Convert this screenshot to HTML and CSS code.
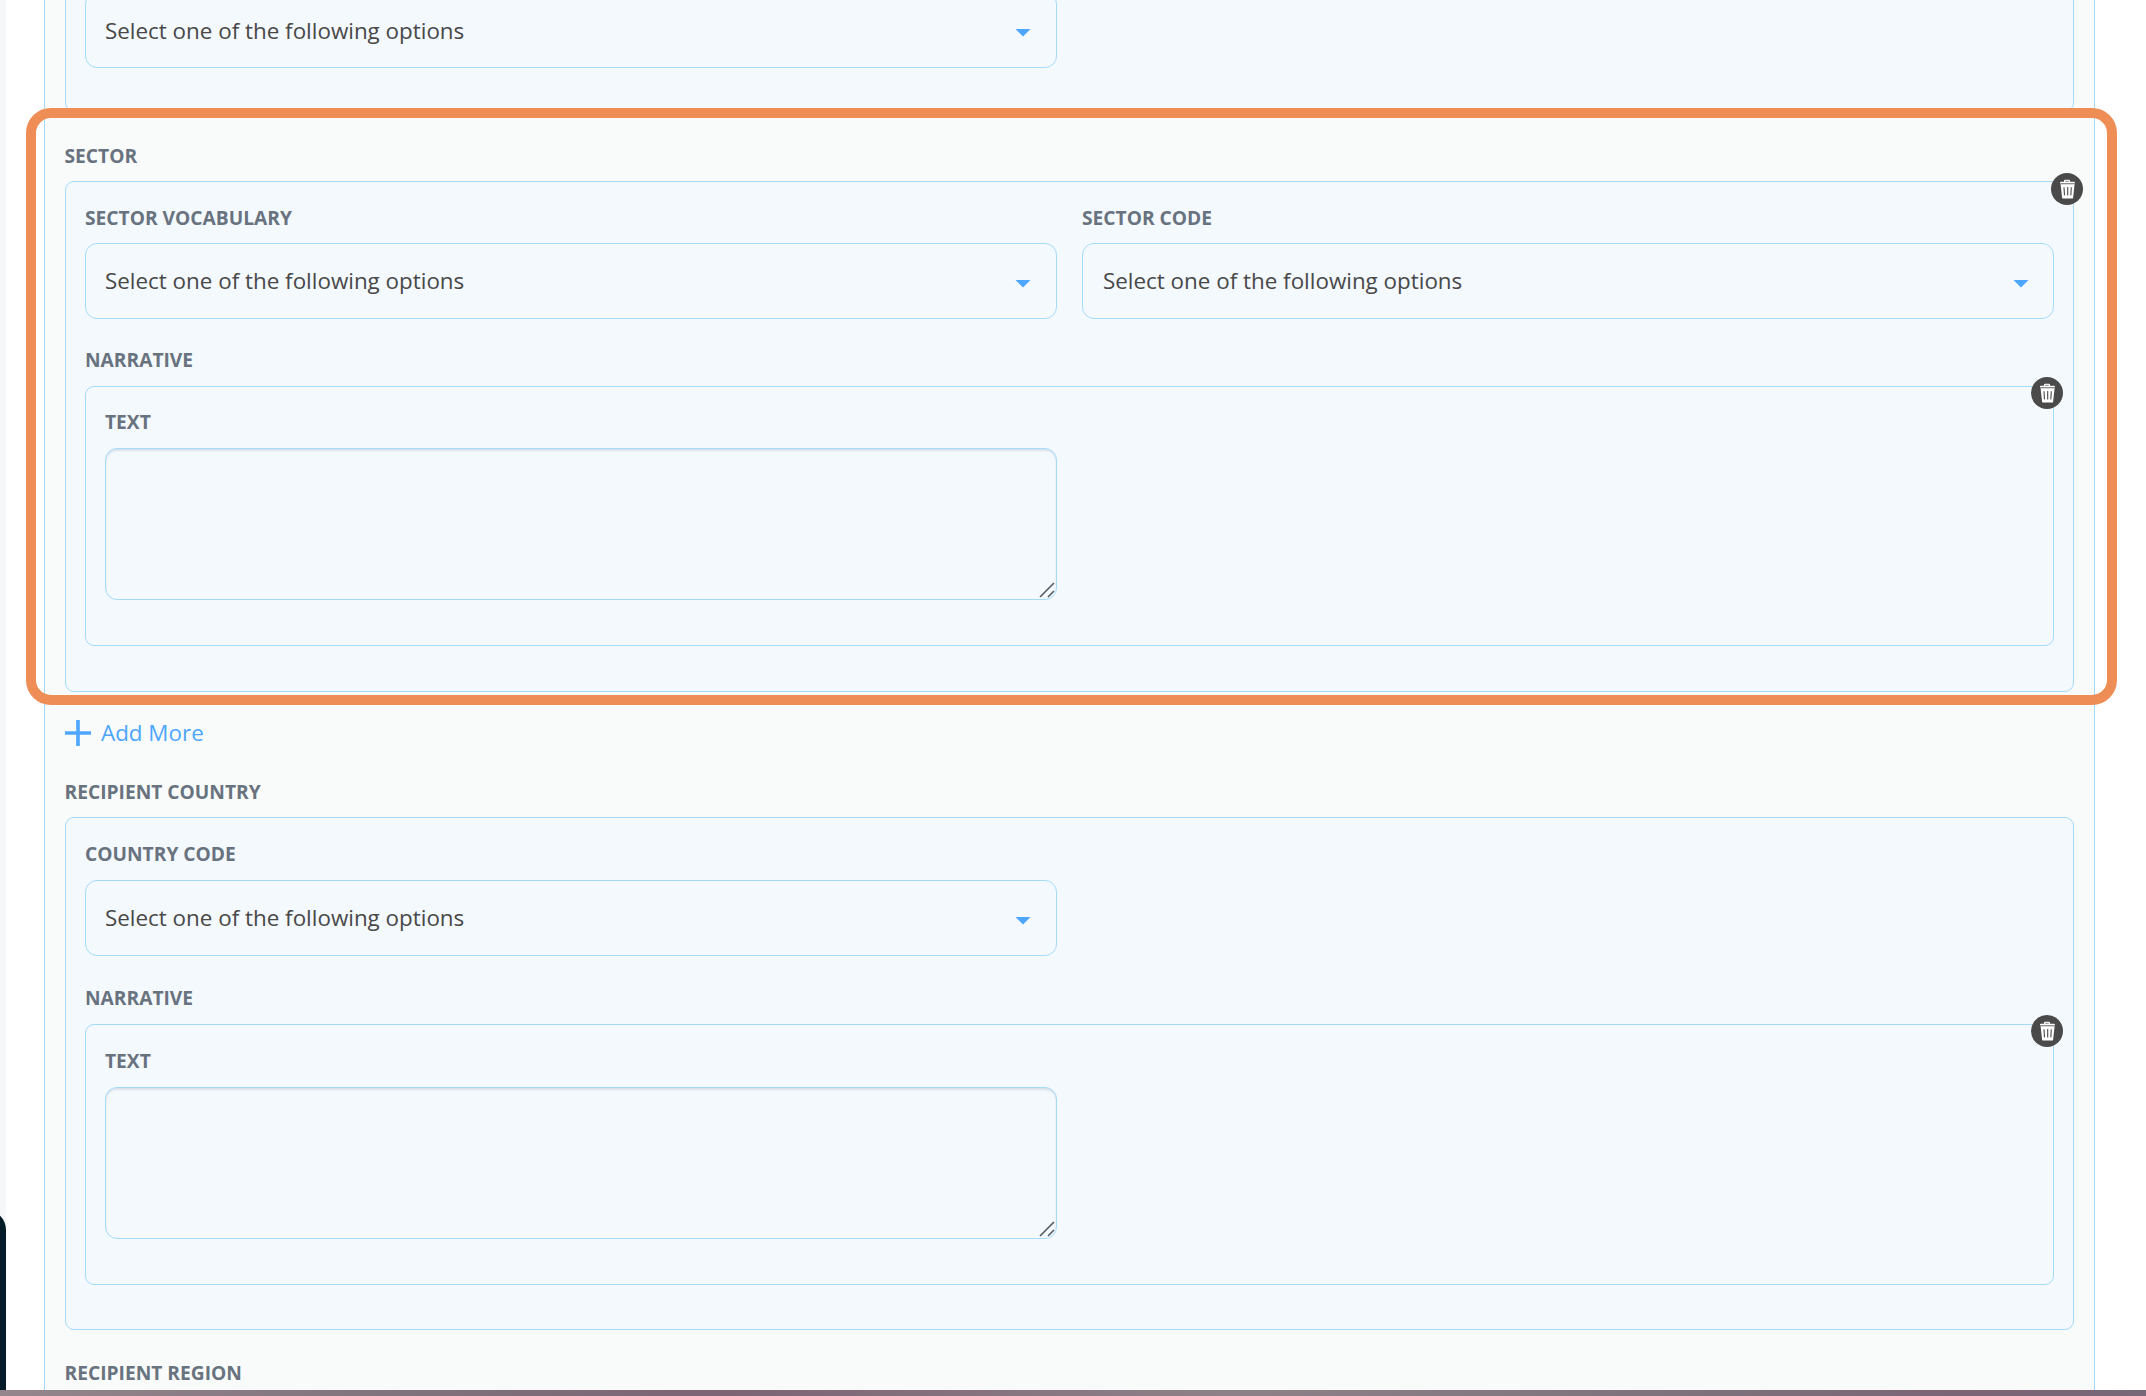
FILE: index.html
```html
<!DOCTYPE html>
<html lang="en">
<head>
<meta charset="utf-8">
<title>Activity form</title>
<link rel="stylesheet" href="styles.css">
</head>
<body>
<svg class="sprite" aria-hidden="true">
  <symbol id="trash" viewBox="0 0 32 32">
    <path d="M13 7.8q0-1 1-1h4q1 0 1 1v1h4q.9 0 .9.9v.6H9v-.6q0-.9.9-.9H13z" fill="#fff"/>
    <path d="M14.2 8.3h3.6" stroke="#8a8a8a" stroke-width="1"/>
    <path d="M9 10.8h15" stroke="#999" stroke-width="1"/>
    <path d="M9.6 11.3h14l-1.5 13.4q-.1.9-1 .9h-9q-.9 0-1-.9z" fill="#fff"/>
    <path d="M13 14.2l.5 8.2M16.7 14v8.6M20.3 14.2l-.5 8.2" stroke="#4a4a4a" stroke-width="1.1"/>
  </symbol>
</svg>
<div class="app">
  <aside class="rail"><div class="rail-widget"></div></aside>
  <main class="panel">
    <section class="group group-first">
      <div class="select"><span>Select one of the following options</span><i class="caret"></i></div>
    </section>

    <h2 class="label title">Sector</h2>
    <section class="group sector">
      <button class="remove"><svg><use href="#trash"/></svg></button>
      <div class="row">
        <div class="field">
          <label class="label">Sector vocabulary</label>
          <div class="select"><span>Select one of the following options</span><i class="caret"></i></div>
        </div>
        <div class="field">
          <label class="label">Sector code</label>
          <div class="select"><span>Select one of the following options</span><i class="caret"></i></div>
        </div>
      </div>
      <h3 class="label narrative-title">Narrative</h3>
      <div class="narrative">
        <button class="remove"><svg><use href="#trash"/></svg></button>
        <label class="label">Text</label>
        <div class="textarea"><svg class="grip" viewBox="0 0 16 16"><path d="M1 15L15 1M9 15l6-6"/></svg></div>
      </div>
    </section>

    <a class="add"><svg viewBox="0 0 26 26"><path d="M13 0v26M0 13h26"/></svg><span>Add More</span></a>

    <h2 class="label title">Recipient country</h2>
    <section class="group country">
      <div class="row">
        <div class="field">
          <label class="label">Country code</label>
          <div class="select"><span>Select one of the following options</span><i class="caret"></i></div>
        </div>
      </div>
      <h3 class="label narrative-title">Narrative</h3>
      <div class="narrative">
        <button class="remove"><svg><use href="#trash"/></svg></button>
        <label class="label">Text</label>
        <div class="textarea"><svg class="grip" viewBox="0 0 16 16"><path d="M1 15L15 1M9 15l6-6"/></svg></div>
      </div>
    </section>

    <h2 class="label title region">Recipient region</h2>
  </main>
  <div class="highlight"></div>
</div>
<footer class="backdrop"></footer>
</body>
</html>
```

FILE: styles.css
```css
* { box-sizing: border-box; }
body {
  margin: 0;
  height: 1396px;
  overflow: hidden;
  background: #fff;
  font-family: "Open Sans", "Noto Sans", sans-serif;
  color: #484848;
}
.sprite { position: absolute; width: 0; height: 0; }
.app { position: relative; display: flex; height: 1390px; overflow: hidden; }
.rail { width: 6px; background: #f6f7f9; display: flex; align-items: flex-end; overflow: hidden; }
.rail-widget { flex: none; width: 60px; height: 178px; margin-left: -54px; background: #051b28; border-radius: 0 20px 0 0; }
.rail-widget { height: 180px; }
.panel {
  width: 2051px;
  margin-left: 38px;
  padding: 0 20px;
  background: #f9fbfa;
  border: solid #a4dbfb;
  border-width: 0 1px;
}
.group, .narrative {
  position: relative;
  background: #f4f9fe;
  border: 1px solid #a4dbfb;
  border-radius: 9px;
  padding: 0 19px;
}
.group-first { height: 120px; margin-top: -8px; border-top: 0; }
.sector { height: 511px; }
.country { height: 513px; }
.label {
  display: block;
  margin: 0;
  font-size: 19.2px;
  line-height: 26px;
  font-weight: 700;
  color: #68737f;
  text-transform: uppercase;
}
.title { height: 69px; padding-top: 31px; margin-left: -0.5px; }
.region { padding-top: 30px; }
.row { display: flex; gap: 25px; }
.field { width: 972px; padding-top: 23px; }
.field .label { height: 38px; }
.country .field .label { height: 39px; }
.select {
  display: flex;
  align-items: center;
  justify-content: space-between;
  width: 972px;
  height: 76px;
  padding: 0 25px 2px 19px;
  border: 1px solid #a4dbfb;
  border-radius: 12px;
  font-size: 22.4px;
}
.field + .field .select { padding-left: 20px; padding-right: 24px; }
.group-first .select span { padding-top: 2px; }
.caret { width: 16px; height: 8px; margin-top: 7px; background: #4da6ff; clip-path: polygon(0 0, 100% 0, 50% 100%); }
.narrative-title { height: 67px; padding-top: 28px; }
.country .narrative-title { height: 68px; padding-top: 29px; }
.narrative { height: 260px; padding-top: 22px; }
.country .narrative { height: 261px; padding-top: 23px; }
.narrative .label { height: 39px; }
.textarea {
  position: relative;
  width: 952px;
  height: 152px;
  border: 1px solid #a4dbfb;
  border-radius: 12px;
  box-shadow: inset 0 2px 2px rgba(60, 80, 100, .14);
}
.grip { position: absolute; right: 1px; bottom: 1px; width: 16px; height: 16px; fill: none; stroke: #555b60; stroke-width: 1.6; }
.remove {
  position: absolute;
  top: -9px;
  right: -10px;
  width: 32px;
  height: 32px;
  padding: 0;
  border: 0;
  border-radius: 50%;
  background: #4a4a4a;
}
.narrative .remove { top: -10px; }
.remove svg { display: block; width: 32px; height: 32px; }
.add { display: flex; align-items: center; gap: 10px; height: 54px; padding-top: 28px; color: #4da6ff; font-size: 22.4px; line-height: 26px; }
.add svg { width: 26px; height: 26px; stroke: #4da6ff; stroke-width: 3.6; }
.add + .title { height: 71px; padding-top: 33px; }
.highlight {
  position: absolute;
  left: 26px;
  top: 108px;
  width: 2091px;
  height: 597px;
  border: 10px solid #ef8d56;
  border-radius: 25px;
}
.backdrop { height: 6px; background: linear-gradient(90deg, #95868d, #7f717b 20%, #7c6475 34%, #8f8188 57%, #7f747d 76%, #7a6476 92%, #786878); }
```
